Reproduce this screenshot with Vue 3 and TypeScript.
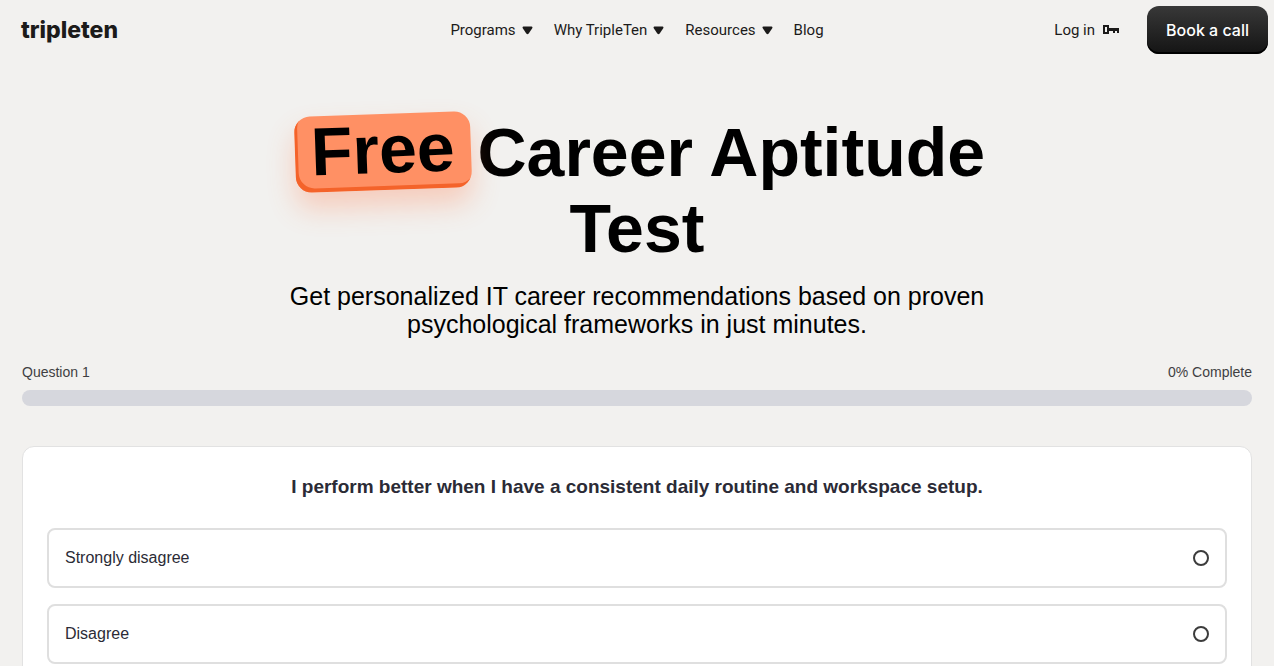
<script setup lang="ts">
import { ref } from 'vue'

interface NavItem {
  label: string
  menu: boolean
}

const navItems: NavItem[] = [
  { label: 'Programs', menu: true },
  { label: 'Why TripleTen', menu: true },
  { label: 'Resources', menu: true },
  { label: 'Blog', menu: false },
]

const answers: string[] = ['Strongly disagree', 'Disagree']
const selected = ref<string>('')
const progress = ref<number>(0)
</script>

<template>
  <div class="page">
    <header class="header">
      <a class="logo" href="#">tripleten</a>
      <nav class="nav">
        <template v-for="item in navItems" :key="item.label">
          <button v-if="item.menu" type="button" class="nav-item">
            {{ item.label }}
            <svg width="11" height="9" viewBox="0 0 11 9" aria-hidden="true">
              <path d="M1.4 0.6h8.2q1.3 .2 .8 1.5L6.7 7.4Q5.5 9 4.3 7.4L.6 2.1Q.1.8 1.4.6z" fill="currentColor" />
            </svg>
          </button>
          <a v-else class="nav-item" href="#">{{ item.label }}</a>
        </template>
      </nav>
      <div class="actions">
        <a class="login" href="#">
          Log in
          <svg width="16" height="10" viewBox="0 0 16 10" aria-hidden="true">
            <path
              fill="currentColor"
              fill-rule="evenodd"
              d="M0 0h6v3h10v5h-2V6h-2v2h-2V6H6v3H0zM2 2v5h2V2z"
            />
          </svg>
        </a>
        <button type="button" class="cta">Book a call</button>
      </div>
    </header>

    <main class="main">
      <section class="hero">
        <h1 class="title"><span class="badge">Free</span> Career Aptitude Test</h1>
        <p class="subtitle">
          Get personalized IT career recommendations based on proven psychological frameworks in just minutes.
        </p>
      </section>

      <section class="progress">
        <div class="progress-labels">
          <span>Question 1</span>
          <span>{{ progress }}% Complete</span>
        </div>
        <div class="track" role="progressbar" aria-valuemin="0" aria-valuemax="100" :aria-valuenow="progress">
          <div class="fill" :style="{ width: progress + '%' }"></div>
        </div>
      </section>

      <section class="card">
        <h2 id="question" class="question">
          I perform better when I have a consistent daily routine and workspace setup.
        </h2>
        <div class="answers" role="radiogroup" aria-labelledby="question">
          <label v-for="answer in answers" :key="answer" class="answer">
            <span>{{ answer }}</span>
            <input v-model="selected" class="radio" type="radio" name="answer" :value="answer" />
          </label>
        </div>
      </section>
    </main>
  </div>
</template>

<style>
body {
  margin: 0;
  background: #f2f1ef;
}
</style>

<style scoped>
.page {
  font-family: "Liberation Sans", Arial, sans-serif;
  color: #000;
  background: #f2f1ef;
}

.header {
  display: grid;
  grid-template-columns: 1fr auto 1fr;
  align-items: center;
  height: 60px;
  padding: 0 6px;
  font-family: Roboto, sans-serif;
  font-size: 15px;
  color: #1c1b1a;
}

.logo {
  justify-self: start;
  padding-left: 15px;
  font-family: Inter, sans-serif;
  font-size: 23px;
  font-weight: 800;
  line-height: 28px;
  color: inherit;
  text-decoration: none;
}

.nav {
  display: flex;
  align-items: center;
  gap: 21px;
}

.nav-item {
  display: flex;
  align-items: center;
  gap: 6px;
  padding: 0;
  border: 0;
  background: none;
  font: inherit;
  line-height: 20px;
  color: inherit;
  text-decoration: none;
  cursor: pointer;
}

.actions {
  display: flex;
  align-items: center;
  justify-self: end;
  gap: 28px;
}

.login {
  display: flex;
  align-items: center;
  gap: 8px;
  line-height: 20px;
  color: inherit;
  text-decoration: none;
}

.cta {
  height: 48px;
  padding: 0 19px;
  border: 0;
  border-radius: 12px;
  background: linear-gradient(#383838, #141414);
  box-shadow: inset 0 -2px 0 #000;
  font-family: Inter, sans-serif;
  font-size: 16px;
  font-weight: 500;
  color: #fff;
  cursor: pointer;
}

.main {
  padding: 54px 22px 40px;
}

.hero {
  max-width: 760px;
  margin: 0 auto;
  text-align: center;
}

.title {
  margin: 0;
  font-size: 68px;
  font-weight: 700;
  line-height: 76px;
}

.badge {
  display: inline-block;
  margin: 0 -12px 0 6px;
  padding: 0 16px 6px;
  border-radius: 16px;
  background: #ff9064;
  box-shadow:
    inset 3px -4px 0 #f4632a,
    0 16px 28px rgba(255, 120, 70, 0.3);
  line-height: 70px;
  vertical-align: top;
  transform: rotate(-2deg);
}

.subtitle {
  margin: 16px 0 0;
  font-size: 25px;
  line-height: 28px;
}

.progress {
  margin-top: 24px;
}

.progress-labels {
  display: flex;
  justify-content: space-between;
  font-size: 14px;
  line-height: 20px;
  color: #3f3f42;
}

.track {
  height: 16px;
  margin-top: 8px;
  overflow: hidden;
  border-radius: 8px;
  background: #d6d7dd;
}

.fill {
  height: 100%;
  background: #ff9064;
}

.card {
  margin-top: 40px;
  padding: 24px;
  border: 1px solid #e2e2e2;
  border-radius: 12px;
  background: #fff;
}

.question {
  margin: 0;
  font-size: 19px;
  font-weight: 700;
  line-height: 32px;
  text-align: center;
  color: #2b2b36;
}

.answers {
  display: grid;
  gap: 16px;
  margin-top: 25px;
}

.answer {
  display: flex;
  align-items: center;
  justify-content: space-between;
  padding: 16px;
  border: 2px solid #dfdfdf;
  border-radius: 8px;
  font-size: 16px;
  line-height: 24px;
  color: #2b2b36;
  cursor: pointer;
}

.radio {
  width: 16px;
  height: 16px;
  margin: 0;
  appearance: none;
  border: 2px solid #3c3c3c;
  border-radius: 50%;
  background: #fff;
}

.radio:checked {
  background: #ff9064;
}
</style>
